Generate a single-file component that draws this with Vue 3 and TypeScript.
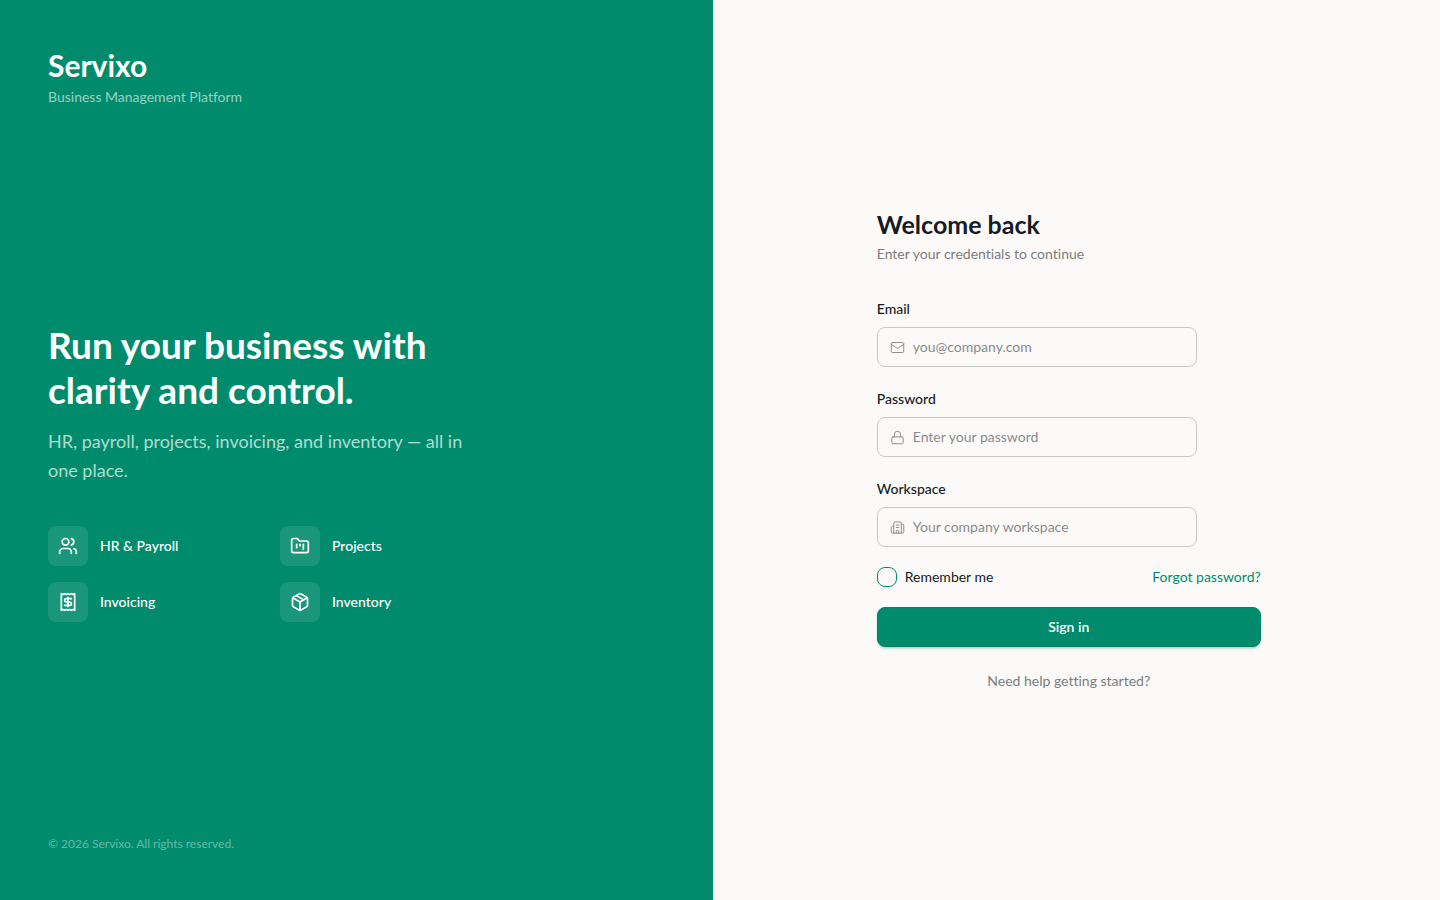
<script setup lang="ts">
import { ref } from 'vue'

interface Feature {
  label: string
  paths: string[]
  circle?: { cx: number; cy: number; r: number }
}

interface Field {
  id: string
  label: string
  type: string
  placeholder: string
  paths: string[]
  rect?: { x: number; y: number; width: number; height: number }
}

const features: Feature[] = [
  {
    label: 'HR & Payroll',
    paths: [
      'M16 21v-2a4 4 0 0 0-4-4H6a4 4 0 0 0-4 4v2',
      'M16 3.128a4 4 0 0 1 0 7.744',
      'M22 21v-2a4 4 0 0 0-3-3.87',
    ],
    circle: { cx: 9, cy: 7, r: 4 },
  },
  {
    label: 'Projects',
    paths: [
      'M4 20h16a2 2 0 0 0 2-2V8a2 2 0 0 0-2-2h-7.93a2 2 0 0 1-1.66-.9l-.82-1.2A2 2 0 0 0 7.93 3H4a2 2 0 0 0-2 2v13c0 1.1.9 2 2 2Z',
      'M8 10v4',
      'M12 10v2',
      'M16 10v6',
    ],
  },
  {
    label: 'Invoicing',
    paths: [
      'M4 2v20l2-1 2 1 2-1 2 1 2-1 2 1 2-1 2 1V2l-2 1-2-1-2 1-2-1-2 1-2-1-2 1Z',
      'M16 8h-6a2 2 0 1 0 0 4h4a2 2 0 1 1 0 4H8',
      'M12 17.5v-11',
    ],
  },
  {
    label: 'Inventory',
    paths: [
      'M11 21.73a2 2 0 0 0 2 0l7-4A2 2 0 0 0 21 16V8a2 2 0 0 0-1-1.73l-7-4a2 2 0 0 0-2 0l-7 4A2 2 0 0 0 3 8v8a2 2 0 0 0 1 1.73z',
      'M12 22V12',
      'M3.29 7 12 12l8.71-5',
      'm7.5 4.27 9 5.15',
    ],
  },
]

const fields: Field[] = [
  {
    id: 'email',
    label: 'Email',
    type: 'email',
    placeholder: 'you@company.com',
    paths: ['m22 7-8.991 5.727a2 2 0 0 1-2.009 0L2 7'],
    rect: { x: 2, y: 4, width: 20, height: 16 },
  },
  {
    id: 'password',
    label: 'Password',
    type: 'password',
    placeholder: 'Enter your password',
    paths: ['M7 11V7a5 5 0 0 1 10 0v4'],
    rect: { x: 3, y: 11, width: 18, height: 11 },
  },
  {
    id: 'workspace',
    label: 'Workspace',
    type: 'text',
    placeholder: 'Your company workspace',
    paths: [
      'M10 12h4',
      'M10 8h4',
      'M14 21v-3a2 2 0 0 0-4 0v3',
      'M6 10H4a2 2 0 0 0-2 2v7a2 2 0 0 0 2 2h16a2 2 0 0 0 2-2V9a2 2 0 0 0-2-2h-2',
      'M6 21V5a2 2 0 0 1 2-2h8a2 2 0 0 1 2 2v16',
    ],
  },
]

const values = ref<Record<string, string>>({ email: '', password: '', workspace: '' })
const remember = ref(false)
</script>

<template>
  <div class="page">
    <section class="brand-panel">
      <header>
        <div class="logo">Servixo</div>
        <p class="tagline">Business Management Platform</p>
      </header>

      <div class="pitch">
        <h1>Run your business with<br />clarity and control.</h1>
        <p class="lead">HR, payroll, projects, invoicing, and inventory — all in one place.</p>
        <ul class="features">
          <li v-for="feature in features" :key="feature.label">
            <span class="tile">
              <svg viewBox="0 0 24 24" aria-hidden="true">
                <circle v-if="feature.circle" v-bind="feature.circle" />
                <path v-for="d in feature.paths" :key="d" :d="d" />
              </svg>
            </span>
            {{ feature.label }}
          </li>
        </ul>
      </div>

      <footer>© 2026 Servixo. All rights reserved.</footer>
    </section>

    <main class="form-panel">
      <div class="card">
        <h2>Welcome back</h2>
        <p class="hint">Enter your credentials to continue</p>

        <form @submit.prevent>
          <div v-for="field in fields" :key="field.id" class="field">
            <label :for="field.id">{{ field.label }}</label>
            <div class="control">
              <svg viewBox="0 0 24 24" aria-hidden="true">
                <rect v-if="field.rect" v-bind="field.rect" rx="2" />
                <path v-for="d in field.paths" :key="d" :d="d" />
              </svg>
              <input
                :id="field.id"
                v-model="values[field.id]"
                :type="field.type"
                :placeholder="field.placeholder"
              />
            </div>
          </div>

          <div class="options">
            <label class="remember" for="remember">
              <input id="remember" v-model="remember" type="checkbox" />
              Remember me
            </label>
            <a href="#">Forgot password?</a>
          </div>

          <button type="submit">Sign in</button>
        </form>

        <p class="help">Need help getting started?</p>
      </div>
    </main>
  </div>
</template>

<style>
body {
  margin: 0;
  background: #fcfaf8;
}
</style>

<style scoped>
.page {
  display: grid;
  grid-template-columns: 1fr 1fr;
  box-sizing: border-box;
  min-height: 100vh;
  padding-right: 15px;
  background: #fcfaf8;
  color: #161b26;
  font-family: Lato, 'Liberation Sans', sans-serif;
  font-size: 14px;
  font-variant-ligatures: none;
  line-height: 20px;
}

h1,
h2,
p,
ul {
  margin: 0;
}

svg {
  flex: none;
  fill: none;
  stroke: currentColor;
  stroke-width: 2;
  stroke-linecap: round;
  stroke-linejoin: round;
}

.brand-panel {
  display: flex;
  flex-direction: column;
  justify-content: space-between;
  padding: 48px;
  background: #008c6c;
  color: #fff;
}

.logo {
  font-size: 30px;
  font-weight: 700;
  line-height: 34px;
}

.tagline {
  margin-top: 5px;
  color: rgba(255, 255, 255, 0.6);
}

.pitch {
  max-width: 448px;
}

h1 {
  font-size: 37px;
  font-weight: 700;
  line-height: 45px;
}

.lead {
  max-width: 432px;
  margin-top: 15px;
  color: rgba(255, 255, 255, 0.7);
  font-size: 18px;
  line-height: 29px;
}

.features {
  display: grid;
  grid-template-columns: 1fr 1fr;
  gap: 16px;
  margin-top: 41px;
  padding: 0;
  list-style: none;
}

.features li {
  display: flex;
  align-items: center;
  gap: 12px;
  font-weight: 500;
}

.tile {
  display: grid;
  place-items: center;
  width: 40px;
  height: 40px;
  border-radius: 8px;
  background: rgba(255, 255, 255, 0.1);
}

.tile svg {
  width: 20px;
  height: 20px;
}

footer {
  color: rgba(255, 255, 255, 0.4);
  font-size: 12px;
  line-height: 16px;
}

.form-panel {
  display: grid;
  place-items: center;
}

.card {
  width: 100%;
  max-width: 384px;
}

h2 {
  font-size: 25px;
  font-weight: 700;
  line-height: 30px;
}

.hint {
  margin-top: 5px;
  color: #7b7d80;
}

form {
  display: flex;
  flex-direction: column;
  gap: 20px;
  margin-top: 33px;
}

.field {
  display: flex;
  flex-direction: column;
  gap: 6px;
}

.field label {
  font-weight: 500;
  line-height: 24px;
}

.control {
  display: flex;
  align-items: center;
  gap: 8px;
  box-sizing: border-box;
  width: 100%;
  max-width: 320px;
  height: 40px;
  padding: 0 12px;
  border: 1px solid #c9c9ca;
  border-radius: 8px;
}

.control svg {
  width: 15px;
  height: 15px;
  color: #85878b;
  stroke-width: 1.5;
}

.control input {
  flex: 1;
  min-width: 0;
  padding: 0;
  border: 0;
  outline: 0;
  background: transparent;
  color: inherit;
  font: inherit;
}

.control input::placeholder {
  color: #898b8f;
  opacity: 1;
}

.options {
  display: flex;
  align-items: center;
  justify-content: space-between;
}

.remember {
  display: flex;
  align-items: center;
  gap: 8px;
}

.remember input {
  appearance: none;
  width: 20px;
  height: 20px;
  margin: 0;
  border: 1px solid #008c6c;
  border-radius: 8px;
}

.remember input:checked {
  background: #008c6c;
}

.options a {
  color: #008c6c;
  text-decoration: none;
}

button {
  height: 40px;
  border: 1px solid #008364;
  border-radius: 8px;
  background: #008c6c;
  box-shadow: 0 2px 3px -1px rgba(0, 140, 108, 0.45);
  color: #fff;
  font: inherit;
  font-weight: 600;
}

.help {
  margin-top: 24px;
  color: #7b7d80;
  text-align: center;
}
</style>
